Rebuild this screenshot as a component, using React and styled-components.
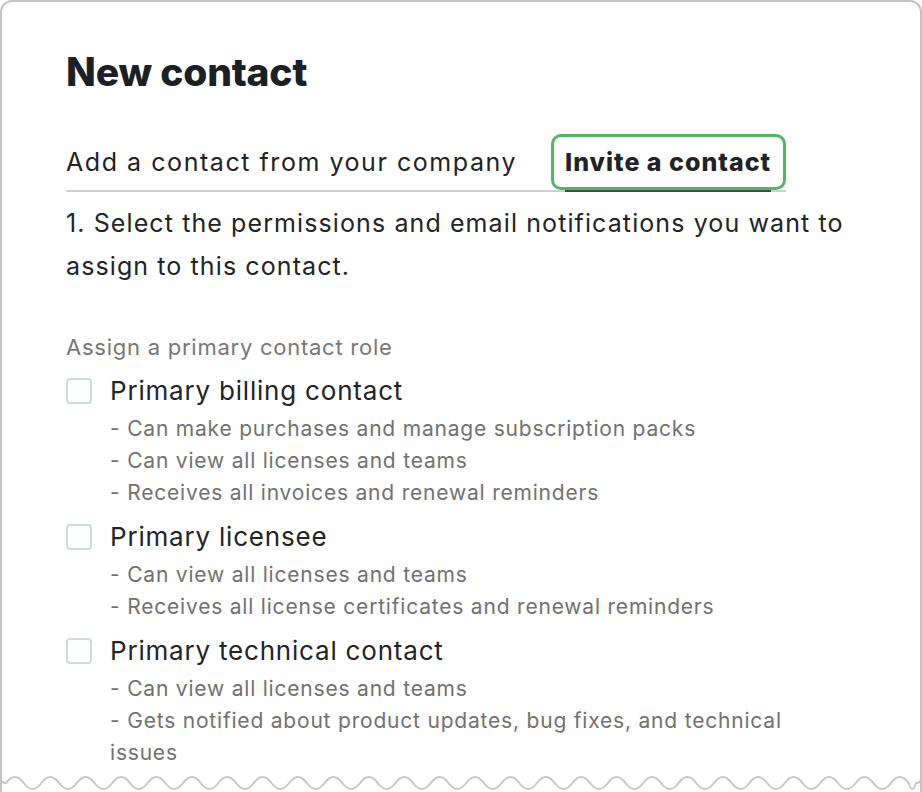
import React from 'react';
import styled, { createGlobalStyle } from 'styled-components';

const GlobalStyle = createGlobalStyle`
    html, body {
        margin: 0;
        padding: 0;
        background: #ffffff;
    }
    body {
        font-family: Inter, "Noto Sans", "Liberation Sans", sans-serif;
        color: #222426;
    }
`;

const Frame = styled.div`
    position: relative;
    width: 922px;
    height: 792px;
    box-sizing: border-box;
    border: 2px solid #c4c4c4;
    border-bottom: none;
    border-radius: 12px 12px 0 0;
    overflow: hidden;
    background: white;
`;

const Content = styled.div`
    padding: 46px 64px 0 64px;
`;

const Title = styled.h1`
    margin: 0;
    font-size: 39px;
    line-height: 48px;
    font-weight: 800;
    color: #1c1f23;
    letter-spacing: -0.2px;
`;

const TabList = styled.div`
    display: inline-flex;
    gap: 34px;
    margin-top: 38px;
    border-bottom: 2px solid #cfcfcf;
`;

const Tab = styled.button`
    position: relative;
    background: none;
    border: none;
    margin: 0;
    padding: ${p => (p.$active ? '14px 15px 14px 14px' : '14px 0')};
    font-family: inherit;
    font-size: 25px;
    line-height: 28px;
    font-weight: ${p => (p.$active ? 800 : 400)};
    letter-spacing: ${p => (p.$active ? '1px' : '1.55px')};
    color: #1f2226;
    border-radius: 10px;
    outline: ${p => (p.$active ? '3px solid #4db863' : 'none')};
    outline-offset: -3px;
    cursor: pointer;

    &::after {
        content: '';
        display: ${p => (p.$active ? 'block' : 'none')};
        position: absolute;
        left: 14px;
        right: 15px;
        bottom: -2px;
        height: 2px;
        background: #4a4a4a;
    }
`;

const Intro = styled.p`
    margin: 10px 0 0;
    font-size: 25px;
    line-height: 43px;
    letter-spacing: 1.1px;
    color: #222426;
`;

const SectionLabel = styled.div`
    margin-top: 44px;
    font-size: 22px;
    line-height: 30px;
    letter-spacing: 0.75px;
    color: #777777;
`;

const RoleList = styled.div`
    display: flex;
    flex-direction: column;
    gap: 14px;
    margin-top: 15px;
`;

const Role = styled.label`
    display: grid;
    grid-template-columns: 26px 1fr;
    column-gap: 18px;
    align-items: start;
`;

const Box = styled.span`
    width: 26px;
    height: 26px;
    box-sizing: border-box;
    border: 2px solid #d0dae4;
    border-radius: 4px;
    margin-top: 1px;
`;

const RoleBody = styled.div`
    display: flex;
    flex-direction: column;
    max-width: 710px;
`;

const RoleName = styled.div`
    font-size: 26px;
    line-height: 28px;
    letter-spacing: 0.8px;
    color: #222426;
    margin-bottom: 8px;
`;

const Perk = styled.div`
    font-size: 21px;
    line-height: 32px;
    letter-spacing: 0.8px;
    color: #717171;
`;

const WaveEdge = styled.svg`
    position: absolute;
    left: -2px;
    bottom: 0;
    display: block;
`;

const roles = [
    {
        name: 'Primary billing contact',
        perks: [
            'Can make purchases and manage subscription packs',
            'Can view all licenses and teams',
            'Receives all invoices and renewal reminders',
        ],
    },
    {
        name: 'Primary licensee',
        perks: [
            'Can view all licenses and teams',
            'Receives all license certificates and renewal reminders',
        ],
    },
    {
        name: 'Primary technical contact',
        perks: [
            'Can view all licenses and teams',
            'Gets notified about product updates, bug fixes, and technical issues',
        ],
    },
];

// wavy "torn" bottom edge
const wavePath = () => {
    const period = 35.4;
    const mid = 17;
    const amp = 6;
    let d = `M1 0 L1 ${mid - 4} Q1 ${mid} 6 ${mid}`;
    let x = 6;
    let up = true;
    while (x < 914) {
        const nx = Math.min(x + period / 2, 916);
        const cy = up ? mid - amp * 2 : mid + amp * 2;
        d += ` Q${(x + nx) / 2} ${cy} ${nx} ${mid}`;
        x = nx;
        up = !up;
    }
    d += ` Q921 ${mid} 921 ${mid - 4} L921 0`;
    return d;
};

export default function App() {
    const d = wavePath();
    return (
        <>
            <GlobalStyle />
            <Frame>
                <Content>
                    <Title>New contact</Title>
                    <TabList>
                        <Tab>Add a contact from your company</Tab>
                        <Tab $active>Invite a contact</Tab>
                    </TabList>
                    <Intro>
                        1. Select the permissions and email notifications you want to assign to this contact.
                    </Intro>
                    <SectionLabel>Assign a primary contact role</SectionLabel>
                    <RoleList>
                        {roles.map(r => (
                            <Role key={r.name}>
                                <Box />
                                <RoleBody>
                                    <RoleName>{r.name}</RoleName>
                                    {r.perks.map(p => (
                                        <Perk key={p}>{`- ${p}`}</Perk>
                                    ))}
                                </RoleBody>
                            </Role>
                        ))}
                    </RoleList>
                </Content>
                <WaveEdge width="922" height="26" viewBox="0 0 922 26">
                    <path d={`${d} L922 0 L922 26 L0 26 L0 0 Z`} fill="#ffffff" stroke="none" />
                    <path d={d} fill="none" stroke="#c8c8c8" strokeWidth="2" />
                </WaveEdge>
            </Frame>
        </>
    );
}
